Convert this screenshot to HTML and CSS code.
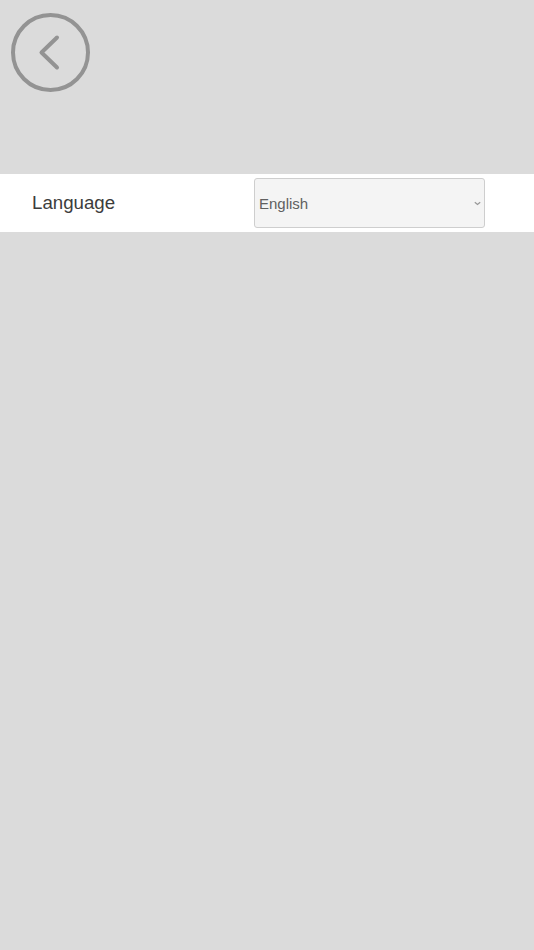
FILE: index.html
```html
<!DOCTYPE html>
<html lang="en">

<head>
	<meta charset="UTF-8">
	<title>Language</title>
	<link rel="stylesheet" href="styles.css">
</head>

<body>
	<div class="top">
		<a class="back" href="#">
			<svg width="80" height="80" viewBox="0 0 80 80">
				<circle cx="39.5" cy="39.5" r="37.5" fill="none" stroke="#939393" stroke-width="4" />
				<path d="M46 24.5 L30.5 39.5 L46 54.5" fill="none" stroke="#939393" stroke-width="4" stroke-linecap="round" stroke-linejoin="round" />
			</svg>
		</a>
	</div>
	<div class="row">
		<span class="label">Language</span>
		<div class="select">
			<span class="value">English</span>
			<svg class="arrow" width="7" height="5" viewBox="0 0 7 5">
				<path d="M0.8 1.2 L3.5 3.4 L6.2 1.2" fill="none" stroke="#999" stroke-width="1.3" />
			</svg>
		</div>
	</div>
</body>

</html>
```

FILE: styles.css
```css
* {
	margin: 0;
	padding: 0;
	box-sizing: border-box;
}

body {
	background: #dbdbdb;
	font-family: "Liberation Sans", Arial, sans-serif;
}

.top {
	height: 174px;
	padding: 13px 0 0 11px;
}

.back {
	display: block;
	width: 80px;
	height: 80px;
}

.row {
	height: 58px;
	background: #fff;
	display: flex;
	align-items: center;
	padding-left: 32px;
}

.label {
	width: 222px;
	font-size: 18.7px;
	color: #3c3c3c;
}

.select {
	width: 231px;
	height: 50px;
	display: flex;
	align-items: center;
	justify-content: space-between;
	padding: 0 3px 0 4px;
	background: #f4f4f4;
	border: 1px solid #cecece;
	border-radius: 3px;
	font-size: 15px;
	color: #606060;
}
```
